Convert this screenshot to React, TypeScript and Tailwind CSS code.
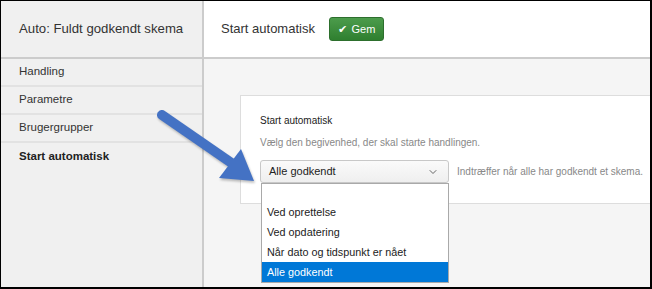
import { ChevronDown } from 'lucide-react';

const menuItems = ['Handling', 'Parametre', 'Brugergrupper', 'Start automatisk'];
const options = ['', 'Ved oprettelse', 'Ved opdatering', 'Når dato og tidspunkt er nået', 'Alle godkendt'];

export default function App() {
  return (
    <div
      className="relative flex w-[652px] h-[289px] overflow-hidden border-t border-l border-r-2 border-b-2 border-black bg-white text-[#333]"
      style={{ fontFamily: '"Liberation Sans", Arial, sans-serif' }}
    >
      {/* Sidebar */}
      <div className="w-[201px] shrink-0 bg-[#f0f0f0] border-r-2 border-[#cccccc] box-content">
        <div className="h-[58px] flex items-center pl-[18px] border-b-2 border-[#cccccc] text-[13.2px] whitespace-nowrap">
          Auto: Fuldt godkendt skema
        </div>
        {menuItems.map((item, i) => (
          <div
            key={item}
            className={`h-[28px] flex items-center pl-[18px] text-[11.5px] ${
              i < menuItems.length - 1 ? 'border-b-2 border-[#e2e2e2]' : 'font-bold text-[#222]'
            }`}
          >
            {item}
          </div>
        ))}
      </div>

      {/* Main */}
      <div className="flex-1 flex flex-col">
        <div className="h-[58px] shrink-0 flex items-center pl-[17px] border-b-2 border-[#cccccc] bg-white">
          <span className="text-[13px]">Start automatisk</span>
          <button className="ml-[14px] h-[24px] w-[55px] flex items-center justify-center gap-[5px] rounded-[3px] border border-[#2d6f2d] bg-gradient-to-b from-[#4c9c4c] to-[#2f7f2f] text-white text-[11px]">
            <span className="text-[11px]">✔</span>
            <span>Gem</span>
          </button>
        </div>

        <div className="flex-1 bg-[#f5f5f5] pl-[36px] pt-[36px]">
          <div className="h-[109px] bg-white border-t border-l border-b border-[#dddddd] pl-[19px] pt-[18px]">
            <div className="text-[10px] leading-[14px] text-[#222]">Start automatisk</div>
            <div className="mt-[8px] text-[10px] leading-[14px] text-[#888]">
              Vælg den begivenhed, der skal starte handlingen.
            </div>
            <div className="mt-[10px] flex items-center">
              <div className="relative">
                <div className="w-[189px] h-[23px] flex items-center justify-between pl-[8px] pr-[9px] rounded-[3px] border border-[#c8c8c8] bg-gradient-to-b from-[#fafafa] to-[#efefef] text-[11px] text-[#222]">
                  <span>Alle godkendt</span>
                  <ChevronDown className="h-[12px] w-[12px] text-[#666]" strokeWidth={2} />
                </div>
                <div className="absolute left-[1px] top-[23px] w-[188px] border border-[#a9a9a9] bg-white z-10">
                  {options.map((opt, i) => (
                    <div
                      key={i}
                      className={`flex items-center pl-[5px] text-[10.8px] ${i === 0 ? 'h-[18px]' : 'h-[20px]'} ${
                        opt === 'Alle godkendt' ? 'bg-[#0078d7] text-white' : 'text-[#222]'
                      }`}
                    >
                      {opt}
                    </div>
                  ))}
                </div>
              </div>
              <span className="ml-[8px] text-[10px] text-[#888] whitespace-nowrap">
                Indtræffer når alle har godkendt et skema.
              </span>
            </div>
          </div>
        </div>
      </div>

      {/* Arrow annotation */}
      <svg
        className="absolute left-0 top-0 pointer-events-none drop-shadow-[1px_2px_1px_rgba(0,0,0,0.25)]"
        width="652"
        height="289"
      >
        <line x1="161" y1="114" x2="232" y2="163" stroke="#4472c4" strokeWidth="10" strokeLinecap="round" />
        <polygon points="253,180 218,177 240,148" fill="#4472c4" />
      </svg>
    </div>
  );
}
